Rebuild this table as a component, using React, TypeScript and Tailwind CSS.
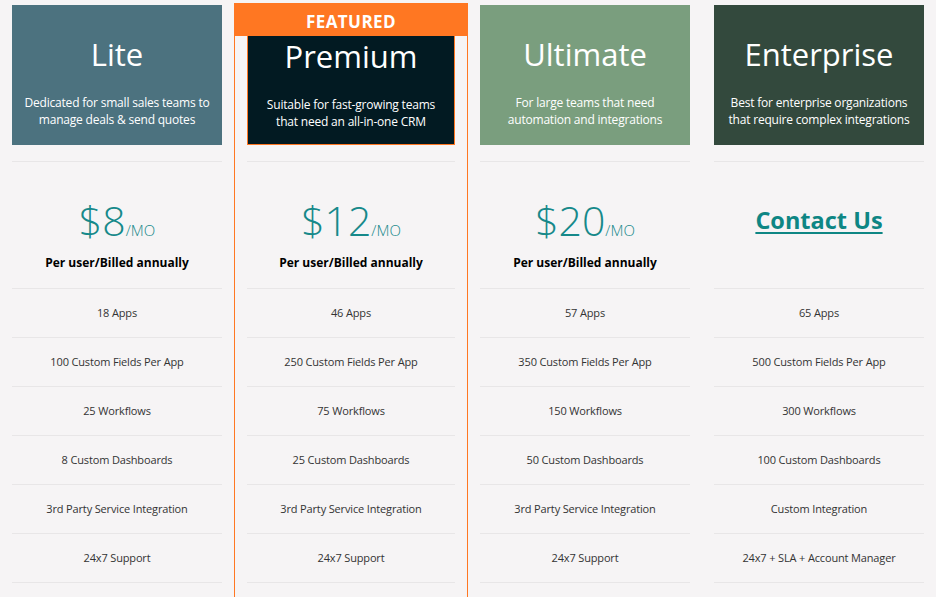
const plans = [
  {
    name: "Lite",
    desc: ["Dedicated for small sales teams to", "manage deals & send quotes"],
    head: "bg-[#4c727f]",
    price: "$8",
    features: ["18 Apps", "100 Custom Fields Per App", "25 Workflows", "8 Custom Dashboards", "3rd Party Service Integration", "24x7 Support"],
  },
  {
    name: "Premium",
    desc: ["Suitable for fast-growing teams", "that need an all-in-one CRM"],
    head: "bg-[#021a22]",
    price: "$12",
    featured: true,
    features: ["46 Apps", "250 Custom Fields Per App", "75 Workflows", "25 Custom Dashboards", "3rd Party Service Integration", "24x7 Support"],
  },
  {
    name: "Ultimate",
    desc: ["For large teams that need", "automation and integrations"],
    head: "bg-[#7a9e7e]",
    price: "$20",
    features: ["57 Apps", "350 Custom Fields Per App", "150 Workflows", "50 Custom Dashboards", "3rd Party Service Integration", "24x7 Support"],
  },
  {
    name: "Enterprise",
    desc: ["Best for enterprise organizations", "that require complex integrations"],
    head: "bg-[#33493d]",
    price: null,
    features: ["65 Apps", "500 Custom Fields Per App", "300 Workflows", "100 Custom Dashboards", "Custom Integration", "24x7 + SLA + Account Manager"],
  },
]

type Plan = (typeof plans)[number] & { featured?: boolean }

function Column({ plan }: { plan: Plan }) {
  const featured = !!plan.featured
  return (
    <div className={featured ? "border-x border-[#ff7722] mt-[3px]" : "pt-[5px]"}>
      {featured && (
        <div className="h-[33px] bg-[#ff7722] text-white text-[17px] leading-[33px] pt-[2px] font-bold tracking-wide text-center">
          FEATURED
        </div>
      )}
      <div className="px-3">
        <div
          className={`${plan.head} text-white text-center flex flex-col items-center ${
            featured ? "h-[109px] pt-px border-x border-b border-[#ff7722]" : "h-[140px] pt-[30px]"
          }`}
        >
          <h2 className="text-[31px] leading-[40px] font-medium -mt-[1px]">{plan.name}</h2>
          <p className={`text-[12px] tracking-[-0.2px] leading-[17px] ${featured ? "mt-[20px]" : "mt-[20px]"}`}>
            {plan.desc[0]}
            <br />
            {plan.desc[1]}
          </p>
        </div>
        <div className="mt-4 border-t border-[#e8e6e7] h-[127px] flex flex-col items-center">
          {plan.price ? (
            <>
              <div className="mt-[33px] h-[50px] flex items-end text-[#16898a]">
                <span className="text-[41px] leading-[50px] font-light">{plan.price}</span>
                <span className="text-[15px] leading-[22px] font-light mb-[4px]">/MO</span>
              </div>
              <div className="mt-[9px] text-[12px] font-bold text-black">Per user/Billed annually</div>
            </>
          ) : (
            <a href="#" className="mt-[41px] text-[23.5px] leading-[34px] font-bold text-[#0e8684] underline decoration-2 underline-offset-[3px]">
              Contact Us
            </a>
          )}
        </div>
        {plan.features.map((f) => (
          <div
            key={f}
            className="h-[49px] border-t border-[#e8e6e7] flex items-center justify-center text-[11px] tracking-[-0.15px] text-[#333]"
          >
            {f}
          </div>
        ))}
        <div className="border-t border-[#e8e6e7]" />
      </div>
    </div>
  )
}

export default function App() {
  return (
    <div
      className="h-[597px] overflow-hidden bg-[#f6f4f5] grid grid-cols-4"
      style={{ fontFamily: '"Open Sans", "Noto Sans", sans-serif' }}
    >
      {plans.map((p) => (
        <Column key={p.name} plan={p as Plan} />
      ))}
    </div>
  )
}
